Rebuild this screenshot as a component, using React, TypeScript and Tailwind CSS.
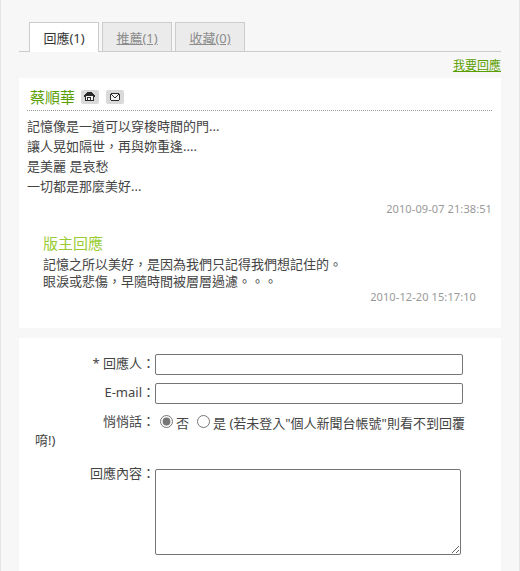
import type { ReactNode } from 'react'

const tabs = [
  { label: '回應(1)', active: true },
  { label: '推薦(1)', active: false },
  { label: '收藏(0)', active: false },
]

const commentLines = [
  '記憶像是一道可以穿梭時間的門...',
  '讓人晃如隔世，再與妳重逢....',
  '是美麗 是哀愁',
  '一切都是那麼美好...',
]

const replyLines = [
  '記憶之所以美好，是因為我們只記得我們想記住的。',
  '眼淚或悲傷，早隨時間被層層過濾。。。',
]

function IconBadge({ children }: { children: ReactNode }) {
  return (
    <a href="#" className="block h-[14px] w-[18px] rounded-[2px] bg-[#d9d9d9]">
      <svg width="18" height="14" viewBox="0 0 18 14" fill="#2b2b2b" shapeRendering="crispEdges">
        {children}
      </svg>
    </a>
  )
}

function HomeIcon() {
  return (
    <IconBadge>
      <path d="M6 2h5v1h1v1h1v1h1v2h-11v-2h1v-1h1v-1h1z" />
      <path d="M4 7h9v4h-9z" />
      <path d="M5 6h7v4h-7z" fill="#f4f4f4" />
      <path d="M6 7h4v3h-1v-2h-2v2h-1z" />
    </IconBadge>
  )
}

function MailIcon() {
  return (
    <IconBadge>
      <path d="M5 3h8v1h1v6h-1v1h-8v-1h-1v-6h1z" />
      <path d="M5 4h8v6h-8z" fill="#f4f4f4" />
      <path d="M5 4h1v1h-1zM6 5h1v1h-1zM7 6h1v1h-1zM8 7h2v1h-2zM10 6h1v1h-1zM11 5h1v1h-1zM12 4h1v1h-1z" />
    </IconBadge>
  )
}

function FieldLabel({ children }: { children: ReactNode }) {
  return <label className="w-[120px] shrink-0 text-right leading-[18px]">{children}</label>
}

export default function App() {
  return (
    <div
      lang="zh-TW"
      className="h-[571px] w-[520px] overflow-hidden border-x border-[#e5e5e5] bg-[#f7f7f7] px-[18px] pt-[22px] font-['Noto_Sans','Noto_Sans_CJK_TC',sans-serif] text-[13px] text-[#444]"
    >
      {/* Tabs */}
      <div className="flex h-[30px] gap-[3px] border-b border-[#ccc] pl-[10px]">
        {tabs.map((tab) => (
          <a
            key={tab.label}
            href="#"
            className={
              tab.active
                ? 'h-[30px] w-[70px] border border-b-0 border-[#ccc] bg-white text-center leading-[30px] text-[#333]'
                : 'h-[29px] w-[70px] border border-b-0 border-[#ccc] bg-[#ebebeb] text-center leading-[30px] text-[#8c8c8c] underline'
            }
          >
            {tab.label}
          </a>
        ))}
      </div>

      <div className="flex h-[26px] justify-end text-[12px] leading-[27px]">
        <a href="#" className="text-[#5a9e00] underline">我要回應</a>
      </div>

      {/* Comment */}
      <div className="h-[250px] bg-white px-2 pr-[9px]">
        <div className="flex h-[33px] items-center border-b border-dotted border-[#999] pt-[5px] pl-[3px]">
          <span className="mr-[6px] text-[15px] leading-[20px] text-[#5a9e00]">蔡順華</span>
          <div className="flex gap-[7px]">
            <HomeIcon />
            <MailIcon />
          </div>
        </div>
        <div className="pt-[5px] leading-[20px]">
          {commentLines.map((line) => (
            <p key={line}>{line}</p>
          ))}
        </div>
        <p className="mt-[5px] text-right text-[11px] leading-[16px] tracking-[0.1px] text-[#999]">2010-09-07 21:38:51</p>

        <div className="mt-[16px] pr-4 pl-4">
          <h3 className="text-[15px] leading-[20px] text-[#99cc33]">版主回應</h3>
          <div className="mt-[3px] leading-[17px]">
            {replyLines.map((line) => (
              <p key={line}>{line}</p>
            ))}
          </div>
          <p className="-mt-px text-right text-[11px] leading-[16px] tracking-[0.1px] text-[#999]">2010-12-20 15:17:10</p>
        </div>
      </div>

      {/* Reply form */}
      <form className="mt-[10px] h-[240px] bg-white px-4 pt-4">
        <div className="flex h-[29px]">
          <FieldLabel>* 回應人：</FieldLabel>
          <input type="text" className="h-[21px] w-[308px] rounded-[2px] border border-[#767676] bg-white px-1" />
        </div>
        <div className="flex h-[29px]">
          <FieldLabel>E-mail：</FieldLabel>
          <input type="text" className="h-[21px] w-[308px] rounded-[2px] border border-[#767676] bg-white px-1" />
        </div>
        <div className="flex h-[18px]">
          <FieldLabel>悄悄話：</FieldLabel>
          <label className="ml-[5px] flex leading-[23px]">
            <input type="radio" name="secret" defaultChecked className="mt-[3px] mr-[3px] size-[13px] accent-[#767676]" />
            否
          </label>
          <label className="ml-[8px] flex whitespace-nowrap leading-[23px]">
            <input type="radio" name="secret" className="mt-[3px] mr-[3px] size-[13px] accent-[#767676]" />
            是 (若未登入"個人新聞台帳號"則看不到回覆
          </label>
        </div>
        <p className="leading-[20px]">唷!)</p>
        <div className="mt-[14px] flex">
          <FieldLabel>回應內容：</FieldLabel>
          <textarea className="mt-[5px] h-[86px] w-[306px] resize rounded-[2px] border border-[#767676] bg-white p-[2px]" />
        </div>
      </form>
    </div>
  )
}
